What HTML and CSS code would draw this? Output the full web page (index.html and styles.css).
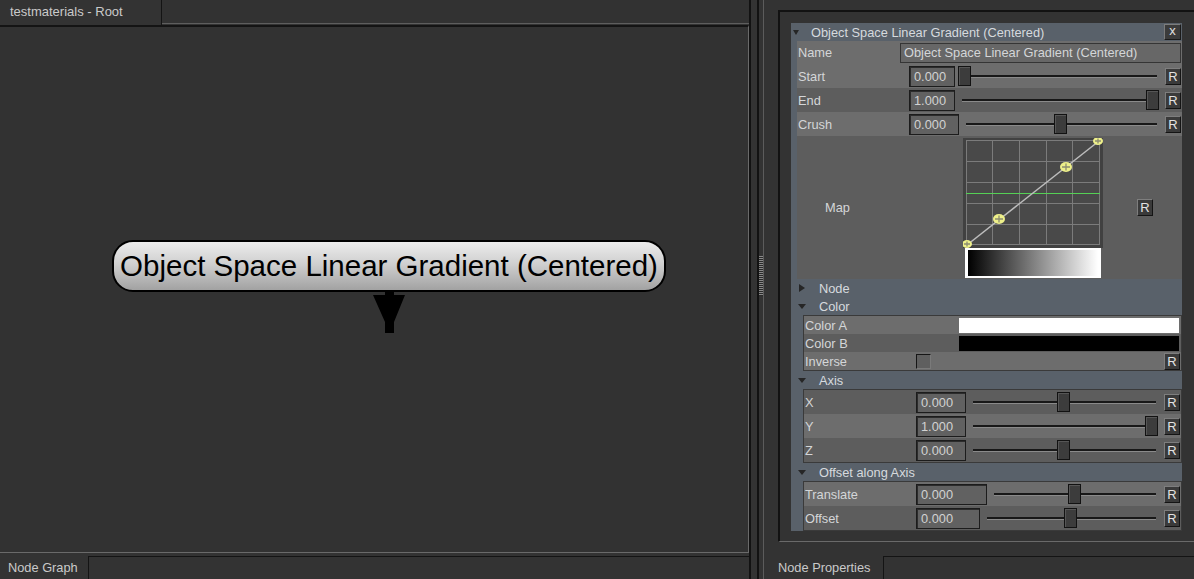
FILE: index.html
```html
<!DOCTYPE html>
<html>
<head>
<meta charset="utf-8">
<title>testmaterials - Root</title>
<link rel="stylesheet" href="styles.css">
</head>
<body>
<div class="app">
  <section class="left">
    <div class="tabbar-top">
      <div class="tab">testmaterials - Root</div>
      <div class="tabfill"></div>
    </div>
    <div class="graph">
      <div class="node">Object Space Linear Gradient (Centered)</div>
      <svg class="arrow" width="40" height="45" viewBox="0 0 40 45">
        <rect x="15" y="0" width="9" height="4" fill="#000"/>
        <path d="M3 3 L35 3 L24 30 L24 41 L15 41 L15 30 Z" fill="#000"/>
      </svg>
    </div>
    <div class="tabbar-bottom">
      <div class="tab tab-graph">Node Graph</div>
      <div class="tabfill"></div>
    </div>
  </section>

  <div class="splitter">
    <div class="sp-gap"></div>
    <div class="sp-line"></div>
    <div class="sp-grip"><div class="grip"></div></div>
  </div>

  <section class="right">
    <div class="frame">
      <div class="panel">
        <div class="phead">
          <span class="caret down head"></span>
          <span class="ptitle">Object Space Linear Gradient (Centered)</span>
          <span class="xbtn">x</span>
        </div>
        <div class="rows">
          <div class="row name light">
            <span class="lbl">Name</span>
            <div class="namefield">Object Space Linear Gradient (Centered)</div>
          </div>
          <div class="row light">
            <span class="lbl">Start</span>
            <div class="num">0.000</div>
            <div class="slider"><span class="handle" style="--v:0"></span></div>
            <span class="rbtn">R</span>
          </div>
          <div class="row dark">
            <span class="lbl">End</span>
            <div class="num">1.000</div>
            <div class="slider"><span class="handle" style="--v:1"></span></div>
            <span class="rbtn">R</span>
          </div>
          <div class="row light">
            <span class="lbl">Crush</span>
            <div class="num w50">0.000</div>
            <div class="slider"><span class="handle" style="--v:0.5"></span></div>
            <span class="rbtn">R</span>
          </div>
          <div class="row map dark">
            <span class="lbl maplbl">Map</span>
            <svg class="curve" width="140" height="141" viewBox="0 0 140 141">
              <defs>
                <linearGradient id="bw" x1="0" y1="0" x2="1" y2="0">
                  <stop offset="0" stop-color="#000"/>
                  <stop offset="1" stop-color="#fff"/>
                </linearGradient>
              </defs>
              <rect x="0" y="0" width="140" height="110" fill="#414141"/>
              <rect x="3" y="2" width="134" height="105" fill="#494949"/>
              <path d="M3.5 2v105M29.5 2v105M56.5 2v105M83.5 2v105M109.5 2v105M136.5 2v105M3 2.5h134M3 23.5h134M3 44.5h134M3 65.5h134M3 86.5h134M3 106.5h134" stroke="#7b7b7b" stroke-width="1" fill="none"/>
              <path d="M3 55.5h134" stroke="#55d055" stroke-width="1"/>
              <path d="M4 107 L136 3" stroke="#bdbdbd" stroke-width="1.5"/>
              <g fill="#eef08a">
                <ellipse cx="4" cy="106" rx="5" ry="4"/>
                <ellipse cx="36" cy="81" rx="6" ry="5"/>
                <ellipse cx="103" cy="29" rx="6" ry="5"/>
                <ellipse cx="135" cy="3" rx="5" ry="4"/>
              </g>
              <path d="M1 106h6M4 103.5v5M32 81h8M36 77.5v7M99 29h8M103 25.5v7M132 3h6M135 0.5v5" stroke="#8c8c70" stroke-width="1.3" fill="none"/>
              <rect x="2" y="110" width="136" height="30" fill="#fff"/>
              <rect x="5" y="112" width="130" height="26" fill="url(#bw)"/>
            </svg>
            <span class="rbtn">R</span>
          </div>
        </div>

        <div class="sechead"><span class="caret right"></span><span>Node</span></div>
        <div class="sechead"><span class="caret down"></span><span>Color</span></div>
        <div class="box">
          <div class="row short light">
            <span class="lbl wide">Color A</span>
            <span class="swatch white"></span>
          </div>
          <div class="row short dark">
            <span class="lbl wide">Color B</span>
            <span class="swatch black"></span>
          </div>
          <div class="row short light">
            <span class="lbl">Inverse</span>
            <span class="check"></span>
            <span class="spacer"></span>
            <span class="rbtn">R</span>
          </div>
        </div>

        <div class="sechead"><span class="caret down"></span><span>Axis</span></div>
        <div class="box">
          <div class="row dark">
            <span class="lbl">X</span>
            <div class="num w50">0.000</div>
            <div class="slider"><span class="handle" style="--v:0.5"></span></div>
            <span class="rbtn">R</span>
          </div>
          <div class="row light">
            <span class="lbl">Y</span>
            <div class="num w50">1.000</div>
            <div class="slider"><span class="handle" style="--v:1"></span></div>
            <span class="rbtn">R</span>
          </div>
          <div class="row dark">
            <span class="lbl">Z</span>
            <div class="num w50">0.000</div>
            <div class="slider"><span class="handle" style="--v:0.5"></span></div>
            <span class="rbtn">R</span>
          </div>
        </div>

        <div class="sechead"><span class="caret down"></span><span>Offset along Axis</span></div>
        <div class="box">
          <div class="row light">
            <span class="lbl">Translate</span>
            <div class="num w71">0.000</div>
            <div class="slider"><span class="handle" style="--v:0.5"></span></div>
            <span class="rbtn">R</span>
          </div>
          <div class="row dark">
            <span class="lbl">Offset</span>
            <div class="num w64">0.000</div>
            <div class="slider"><span class="handle" style="--v:0.5"></span></div>
            <span class="rbtn">R</span>
          </div>
        </div>
      </div>
    </div>
    <div class="tabbar-bottom">
      <div class="tab tab-props">Node Properties</div>
      <div class="tabfill"></div>
    </div>
  </section>
</div>
</body>
</html>
```

FILE: styles.css
```css
* { box-sizing: border-box; }
html, body { margin: 0; padding: 0; }
body {
  width: 1194px;
  height: 579px;
  overflow: hidden;
  background: #333333;
  font-family: "Liberation Sans", Arial, sans-serif;
  font-size: 12.8px;
  color: #d4d6d8;
}
.app { display: flex; height: 579px; }

/* ---------- left pane ---------- */
.left {
  width: 751px;
  flex: none;
  display: flex;
  flex-direction: column;
  border-right: 2px solid #121212;
}
.tabbar-top { height: 25px; display: flex; flex: none; }
.tabbar-top .tab {
  width: 162px;
  border-right: 1px solid #141414;
  padding-left: 10px;
  font-size: 13px;
  line-height: 24px;
  color: #cacaca;
  background: #333333;
}
.tabbar-top .tabfill {
  flex: 1;
  height: 24px;
  border-bottom: 1px solid #5e5e5e;
  background: #323232;
}
.graph {
  position: relative;
  flex: 1;
  margin-bottom: 3px;
  border-top: 2px solid #141414;
  border-right: 1px solid #6a6a6a;
  border-bottom: 1px solid #6a6a6a;
  background: #323232;
}
.node {
  position: absolute;
  left: 112px;
  top: 213px;
  width: 554px;
  height: 52px;
  border: 2px solid #000;
  border-radius: 21px;
  background: linear-gradient(#ececec, #d0d0d0 45%, #a2a2a2);
  color: #000;
  font-size: 29.5px;
  line-height: 48px;
  text-align: center;
  white-space: nowrap;
}
.arrow { position: absolute; left: 370px; top: 265px; }

.tabbar-bottom { height: 23px; display: flex; flex: none; }
.tabbar-bottom .tab {
  border-right: 1px solid #141414;
  line-height: 23px;
  color: #cacaca;
  background: #333333;
}
.tab-graph { width: 89px; padding-left: 8px; }
.tab-props { width: 120px; padding-left: 14px; }
.tabbar-bottom .tabfill { flex: 1; border-top: 1px solid #141414; }

/* ---------- splitter ---------- */
.splitter { width: 12px; flex: none; display: flex; }
.sp-gap { width: 6px; }
.sp-line { width: 2px; background: #121212; }
.sp-grip { width: 4px; padding-top: 256px; }
.grip {
  height: 40px;
  background: repeating-linear-gradient(#8a8a8a 0 1px, #2a2a2a 1px 2px);
}

/* ---------- right pane ---------- */
.right {
  flex: 1;
  display: flex;
  flex-direction: column;
  border-left: 1px solid #5c5c5c;
}
.frame {
  margin-top: 10px;
  margin-left: 14px;
  margin-bottom: 14px;
  height: 532px;
  flex: none;
  border-top: 2px solid #121212;
  border-left: 2px solid #121212;
  border-bottom: 1px solid #6a6a6a;
  padding: 11px 0 10px 11px;
}
.panel {
  width: 391px;
  height: 508px;
  background: #59616a;
}
.phead {
  height: 18px;
  display: flex;
  align-items: center;
  padding-left: 2px;
  color: #d6dade;
}
.xbtn {
  margin-left: auto;
  margin-right: 1px;
  width: 17px;
  height: 16px;
  background: #3b3b3b;
  border: 1px solid;
  border-color: #7c7c7c #1a1a1a #1a1a1a #7c7c7c;
  font-size: 13px;
  line-height: 12px;
  text-align: center;
  color: #e0e0e0;
}

.caret { width: 0; height: 0; flex: none; }
.caret.down {
  border-top: 5px solid #262626;
  border-left: 4px solid transparent;
  border-right: 4px solid transparent;
  margin-left: -1px;
  margin-right: 13px;
}
.caret.down.head { margin-left: 0; margin-right: 12px; border-left-width: 3.5px; border-right-width: 3.5px; }
.caret.right {
  border-left: 6px solid #262626;
  border-top: 4px solid transparent;
  border-bottom: 4px solid transparent;
  margin-right: 14px;
}

.rows { margin-left: 6px; }
.row { display: flex; align-items: center; height: 24px; }
.row.light { background: #6d6d6d; }
.row.dark { background: #5d5d5d; }
.row.name { height: 23px; }
.row.short { height: 18px; }
.lbl { width: 112px; flex: none; padding-left: 1px; white-space: nowrap; }
.row.name .lbl { width: 103px; }
.lbl.wide { width: 155px; }
.namefield {
  flex: 1;
  height: 20px;
  margin-right: 1px;
  border: 1px solid #353535;
  background: #676767;
  padding-left: 3px;
  line-height: 18px;
  white-space: nowrap;
}
.num {
  width: 46px;
  height: 21px;
  flex: none;
  border: 1px solid #1c1c1c;
  box-shadow: inset 1px 1px 0 #2c2c2c;
  background: #616161;
  padding-left: 4px;
  line-height: 19px;
  color: #d2d2d2;
}
.num.w50 { width: 50px; }
.num.w71 { width: 71px; }
.num.w64 { width: 64px; }
.slider {
  position: relative;
  flex: 1;
  height: 20px;
  margin-left: 3px;
  margin-right: 6px;
}
.slider::before {
  content: "";
  position: absolute;
  left: 4px;
  right: 2px;
  top: 9px;
  height: 2px;
  background: #181818;
  box-shadow: 0 1px 0 #8a8a8a;
}
.handle {
  position: absolute;
  top: 0;
  left: calc((100% - 13px) * var(--v));
  width: 13px;
  height: 20px;
  background: #3c3c3c;
  border: 1px solid #121212;
  box-shadow: inset 1px 1px 0 #565656;
}
.rbtn {
  width: 16px;
  height: 17px;
  flex: none;
  margin-right: 1px;
  background: #3a3a3a;
  border: 1px solid;
  border-color: #7e7e7e #141414 #141414 #7e7e7e;
  font-size: 13px;
  line-height: 15px;
  text-align: center;
  color: #e2e2e2;
}
.row.map { height: 143px; }
.maplbl { width: 166px; padding-left: 28px; }
.curve { align-self: flex-start; margin-top: 2px; flex: none; }
.row.map .rbtn { margin-left: 34px; }

.sechead {
  height: 18px;
  display: flex;
  align-items: center;
  padding-left: 8px;
  color: #d6dade;
}
.box {
  margin-left: 12px;
  border: 1px solid #3a3a3a;
}
.swatch { width: 220px; height: 15px; flex: none; }
.swatch.white { background: #ffffff; }
.swatch.black { background: #000000; }
.check {
  width: 15px;
  height: 15px;
  flex: none;
  border: 1px solid;
  border-color: #161616 #7a7a7a #7a7a7a #161616;
  background: #5f5f5f;
}
.spacer { flex: 1; }
```
